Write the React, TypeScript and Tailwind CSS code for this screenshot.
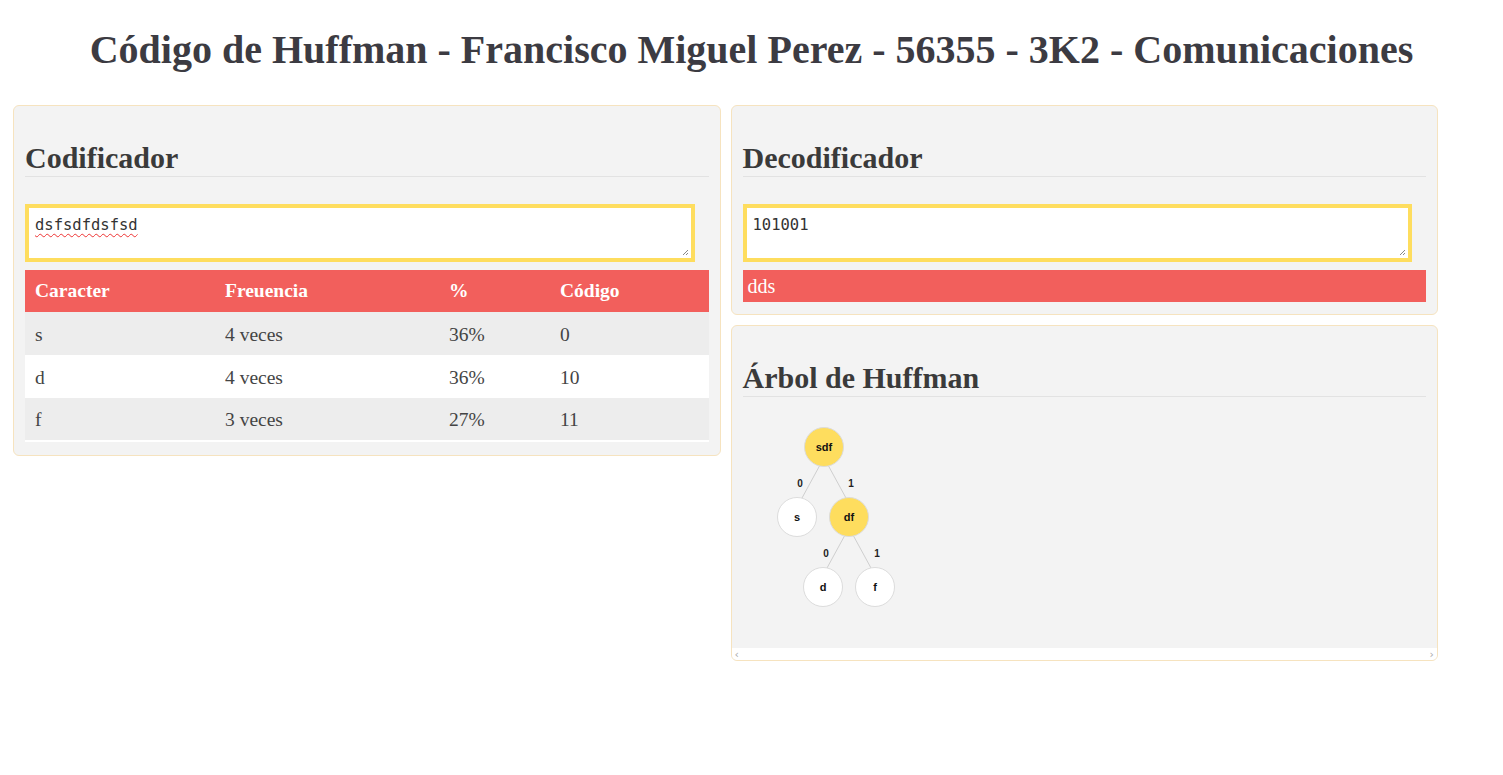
import React from 'react';

const serif = { fontFamily: '"Liberation Serif", "Times New Roman", serif' };
const mono = { fontFamily: '"DejaVu Sans Mono", monospace' };

const rows = [
  { c: 's', f: '4 veces', p: '36%', code: '0' },
  { c: 'd', f: '4 veces', p: '36%', code: '10' },
  { c: 'f', f: '3 veces', p: '27%', code: '11' },
];

const Grip = () => (
  <svg className="absolute right-[2px] bottom-[2px]" width="7" height="7" viewBox="0 0 7 7">
    <path d="M6 1 L1 6 M6 4 L4 6" stroke="#888" strokeWidth="1" />
  </svg>
);

const Heading = ({ children }: { children: React.ReactNode }) => (
  <h2 className="mt-[24px] pb-[2px] border-b border-[#e2e2e2] text-[30px] leading-[32px] font-bold text-[#3a3a3a]">
    {children}
  </h2>
);

const Node = ({ x, y, label, fill }: { x: number; y: number; label: string; fill: string }) => (
  <g>
    <circle cx={x} cy={y} r={19.5} fill={fill} stroke="#dcdcdc" strokeWidth="1" />
    <text x={x} y={y + 4} textAnchor="middle" fontSize="11" fontWeight="bold" fill="#111" fontFamily="'Liberation Sans', Arial, sans-serif">
      {label}
    </text>
  </g>
);

const EdgeLabel = ({ x, y, t }: { x: number; y: number; t: string }) => (
  <text x={x} y={y} textAnchor="middle" fontSize="10" fontWeight="bold" fill="#222" fontFamily="'Liberation Sans', Arial, sans-serif">
    {t}
  </text>
);

const Tree = () => (
  <svg width="200" height="220" viewBox="0 0 200 220">
    <g stroke="#cfcfcf" strokeWidth="1">
      <line x1="77" y1="59" x2="59" y2="92" />
      <line x1="85" y1="59" x2="103" y2="92" />
      <line x1="102" y1="129" x2="84" y2="162" />
      <line x1="110" y1="129" x2="128" y2="162" />
    </g>
    <EdgeLabel x={57} y={81} t="0" />
    <EdgeLabel x={108} y={81} t="1" />
    <EdgeLabel x={83} y={151} t="0" />
    <EdgeLabel x={134} y={151} t="1" />
    <Node x={81} y={41} label="sdf" fill="#fedd5e" />
    <Node x={54} y={111} label="s" fill="#ffffff" />
    <Node x={106} y={111} label="df" fill="#fedd5e" />
    <Node x={80} y={181} label="d" fill="#ffffff" />
    <Node x={132} y={181} label="f" fill="#ffffff" />
  </svg>
);

export default function App() {
  return (
    <div className="min-h-screen bg-white" style={serif}>
      <h1 className="pt-[28px] text-center text-[40px] leading-[44px] font-bold text-[#3c3b42]">
        Código de Huffman - Francisco Miguel Perez - 56355 - 3K2 - Comunicaciones
      </h1>
      <div className="mt-[33px] ml-[13px] w-[1425px] grid grid-cols-2 gap-[10px] items-start">
        {/* Codificador */}
        <div className="bg-[#f3f3f3] border border-[#f6e3bf] rounded-[6px] px-[11px] pt-[12px] pb-[13px]">
          <Heading>Codificador</Heading>
          <div className="relative mt-[27px] w-[98%] h-[58px] bg-white border-[4px] border-[#fedd5e] px-[6px] pt-[7px] text-[15.5px] leading-[20px] text-[#333]" style={mono}>
            <span className="underline decoration-wavy decoration-[#e33] decoration-[1px] underline-offset-[3px]">dsfsdfdsfsd</span>
            <Grip />
          </div>
          <table className="mt-[8px] w-full border-collapse text-[19.5px] border-b-[2px] border-white">
            <thead>
              <tr className="bg-[#f25f5c] text-white h-[42px] text-left">
                <th className="w-[200px] pl-[10px] font-bold">Caracter</th>
                <th className="w-[224px] font-bold">Freuencia</th>
                <th className="w-[111px] font-bold">%</th>
                <th className="font-bold">Código</th>
              </tr>
            </thead>
            <tbody className="text-[#444]">
              {rows.map((r, i) => (
                <tr key={r.c} className={`h-[43px] ${i % 2 === 0 ? 'bg-[#ededed]' : 'bg-white'}`}>
                  <td className="pl-[10px] pt-[2px]">{r.c}</td>
                  <td className="pt-[2px]">{r.f}</td>
                  <td className="pt-[2px]">{r.p}</td>
                  <td className="pt-[2px]">{r.code}</td>
                </tr>
              ))}
            </tbody>
          </table>
        </div>

        <div className="flex flex-col gap-[10px]">
          {/* Decodificador */}
          <div className="bg-[#f3f3f3] border border-[#f6e3bf] rounded-[6px] px-[11px] pt-[12px] pb-[12px]">
            <Heading>Decodificador</Heading>
            <div className="relative mt-[27px] w-[98%] h-[58px] bg-white border-[4px] border-[#fedd5e] px-[6px] pt-[7px] text-[15.5px] leading-[20px] text-[#333]" style={mono}>
              101001
              <Grip />
            </div>
            <div className="mt-[8px] h-[32px] bg-[#f25f5c] text-white text-[20px] leading-[32px] pl-[5px]">dds</div>
          </div>

          {/* Árbol */}
          <div className="bg-[#f3f3f3] border border-[#f6e3bf] rounded-[6px] overflow-hidden">
            <div className="px-[11px] pt-[12px] pb-[22px]">
              <Heading>Árbol de Huffman</Heading>
              <div className="mt-[9px]">
                <Tree />
              </div>
            </div>
            <div className="h-[12px] bg-white flex items-center justify-between px-[3px] text-[11px] leading-none text-[#aaa]" style={{ fontFamily: '"DejaVu Sans", sans-serif' }}>
              <span>‹</span>
              <span>›</span>
            </div>
          </div>
        </div>
      </div>
    </div>
  );
}
